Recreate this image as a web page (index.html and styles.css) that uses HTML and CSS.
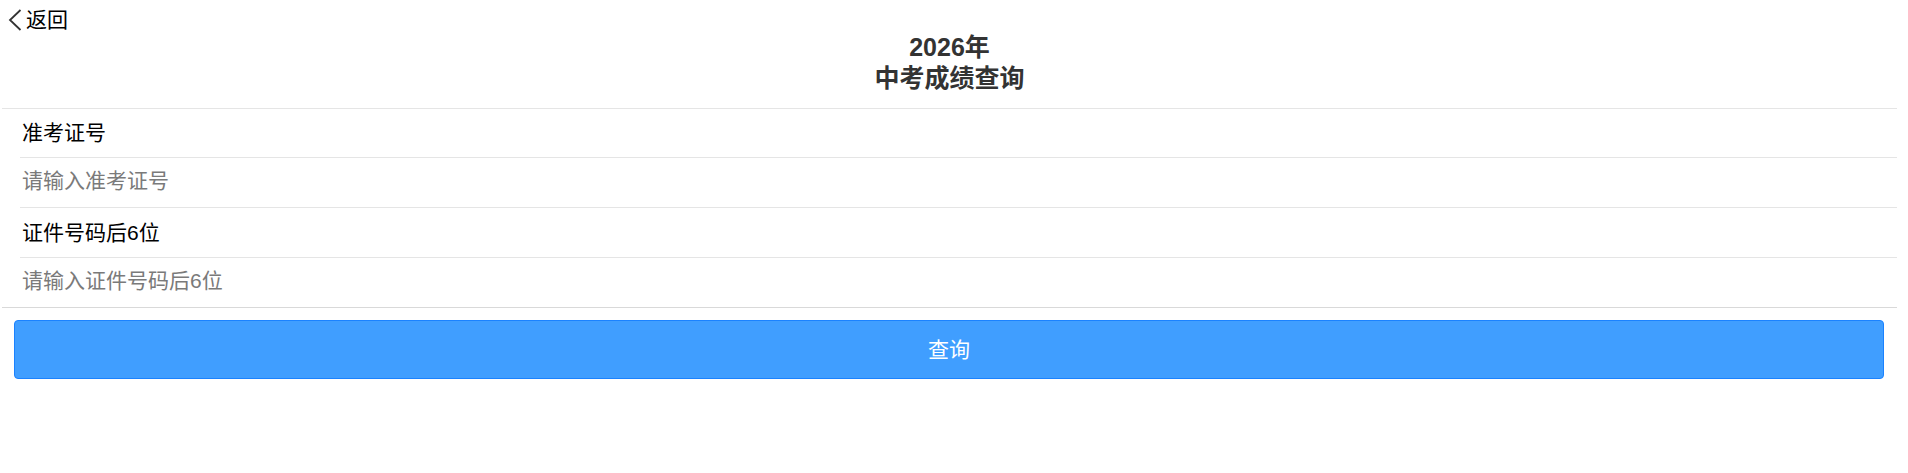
FILE: index.html
```html
<!DOCTYPE html>
<html lang="zh-CN">
<head>
    <meta charset="UTF-8">
    <meta name="viewport" content="width=device-width, initial-scale=1.0">
    <title>中考成绩查询</title>
    <link rel="stylesheet" href="styles.css">
</head>
<body>
    <div class="page">
        <div class="nav">
            <a class="back" href="#">
                <svg class="back-icon" width="14" height="22" viewBox="0 0 14 22">
                    <polyline points="12.5,1 2,11 12.5,21" fill="none" stroke="#333" stroke-width="1.8"/>
                </svg>
                <span>返回</span>
            </a>
        </div>
        <h1 class="title">2026年<br>中考成绩查询</h1>

        <form class="form" onsubmit="return false">
            <div class="cell label first">准考证号</div>
            <div class="cell"><input type="text" placeholder="请输入准考证号"></div>
            <div class="cell label">证件号码后6位</div>
            <div class="cell last"><input type="text" placeholder="请输入证件号码后6位"></div>
        </form>

        <button class="submit" type="button">查询</button>
    </div>
</body>
</html>
```

FILE: styles.css
```css
body {
    margin: 0;
    font-family: "Liberation Sans", "Noto Sans CJK SC", sans-serif;
    background: #fff;
    color: #000;
}

.page {
    margin: 0 11px 0 2px;
}

/* 顶部返回 */
.nav {
    height: 32px;
}

.back {
    display: inline-flex;
    align-items: center;
    gap: 4px;
    padding: 8px 0 0 6px;
    font-size: 21px;
    line-height: 24px;
    color: #000;
    text-decoration: none;
}

.back-icon {
    display: block;
}

.title {
    margin: 0;
    padding-bottom: 14px;
    font-size: 25px;
    line-height: 31px;
    font-weight: bold;
    text-align: center;
    color: #333;
}

/* 表单列表 */
.form {
    border-top: 1px solid #e5e5e5;
    border-bottom: 1px solid #d9d9d9;
}

.cell {
    box-sizing: border-box;
    display: flex;
    align-items: center;
    height: 50px;
    margin-left: 18px;
    padding: 0 0 4px 2px;
    border-bottom: 1px solid #e5e5e5;
    font-size: 21px;
}

.cell.first {
    height: 49px;
}

.cell.last {
    height: 49px;
    border-bottom: none;
}

.cell input {
    flex: 1;
    border: none;
    outline: none;
    padding: 0;
    font-family: inherit;
    font-size: 21px;
    color: #000;
    background: transparent;
}

.cell input::placeholder {
    color: #7a7a7a;
}

.submit {
    display: block;
    width: calc(100% - 25px);
    height: 59px;
    margin: 12px 0 0 12px;
    padding: 0 0 4px;
    border: 1px solid #1b82ff;
    border-radius: 4px;
    background: #409eff;
    color: #fff;
    font-family: inherit;
    font-size: 21px;
    cursor: pointer;
}
```
